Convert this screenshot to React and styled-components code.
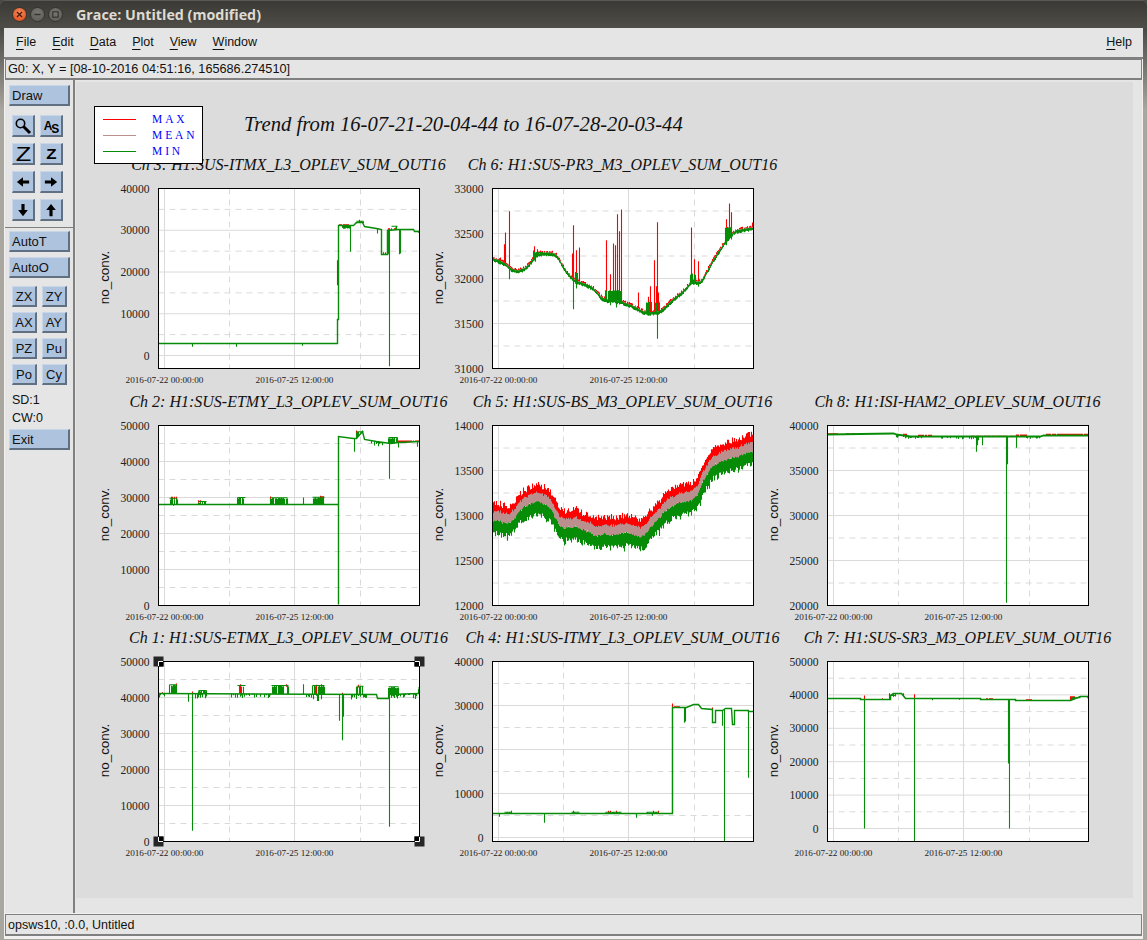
import styled, { createGlobalStyle } from 'styled-components';

const GlobalStyle = createGlobalStyle`
	html, body {
		margin: 0;
		padding: 0;
		background: #a9a59f;
	}
`;

const uiFont = `'Liberation Sans', Arial, sans-serif`;
const plotFont = `'Liberation Serif', 'Times New Roman', serif`;

const colors = {
	panel: '#e5e5e5',
	canvas: '#dcdcdc',
	line: '#808080',
	button: '#aec3dd',
	buttonDark: '#606f82',
	buttonLight: '#c8d6e7',
	grid: '#dadada',
	red: '#ff0000',
	mean: '#bc8f8f',
	green: '#078c07',
};

const Desktop = styled.div`
	width: 1147px;
	height: 940px;
	display: flex;
	flex-direction: column;
	overflow: hidden;
	background: linear-gradient(#4a4943 28px, #a9a59f 110px);
	font-family: ${uiFont};
`;

const TitleBar = styled.div`
	height: 28px;
	flex: none;
	display: flex;
	align-items: center;
	padding-left: 12px;
	border-radius: 5px 5px 0 0;
	background: linear-gradient(#3a3935, #4e4d47);
	box-shadow: inset 0 1px 0 #5a5954;
`;

const WinButton = styled.div`
	width: 15px;
	height: 15px;
	margin-right: 3px;
	border-radius: 50%;
	display: flex;
	align-items: center;
	justify-content: center;
	background: ${(p) => (p.$close ? 'radial-gradient(circle at 50% 35%, #f58a5c, #dd4814)' : 'radial-gradient(circle at 50% 35%, #777670, #5a5953)')};
	border: 1px solid #35342f;
	box-sizing: border-box;
`;

const WinTitle = styled.div`
	margin-left: 10px;
	font-family: 'Open Sans', sans-serif;
	font-weight: 700;
	font-size: 14.3px;
	color: #dfdbd2;
	white-space: nowrap;
`;

const Frame = styled.div`
	flex: 1;
	margin: 0 4px 1px 4px;
	padding: 0 1px 3px 1px;
	background: #f2f1ef;
	display: flex;
	flex-direction: column;
	min-height: 0;
`;

const MenuBar = styled.div`
	height: 31px;
	flex: none;
	margin: 0 -1px;
	display: flex;
	align-items: center;
	gap: 16px;
	padding: 0 11px 1px 12px;
	box-sizing: border-box;
	background: ${colors.panel};
	border-bottom: 2px solid ${colors.line};
	font-size: 12.5px;
	color: #111;
`;

const MenuItem = styled.span`
	margin-left: ${(p) => (p.$right ? 'auto' : '0')};
`;

const Mnemonic = styled.span`
	text-decoration: underline;
	text-decoration-thickness: 1px;
	text-underline-offset: 3px;
`;

const LocatorBar = styled.div`
	height: 21px;
	flex: none;
	box-sizing: border-box;
	border: 1px solid ${colors.line};
	border-bottom-width: 2px;
	background: ${colors.panel};
	padding: 0 2px;
	font-size: 12.7px;
	line-height: 18px;
	color: #111;
`;

const Main = styled.div`
	flex: 1;
	display: flex;
	min-height: 0;
	background: ${colors.panel};
`;

const ToolPanel = styled.div`
	width: 68px;
	flex: none;
	box-sizing: border-box;
	padding-top: 5px;
	display: flex;
	flex-direction: column;
	background: ${colors.panel};
	font-size: 12.5px;
	color: #111;
`;

const PanelEdge = styled.div`
	width: 3px;
	flex: none;
	border-left: 2px solid ${colors.line};
	box-sizing: border-box;
`;

const Button = styled.div`
	box-sizing: border-box;
	display: flex;
	align-items: center;
	background: ${colors.button};
	border-style: solid;
	border-width: 1px 2px 2px 1px;
	border-color: ${colors.buttonLight} ${colors.buttonDark} ${colors.buttonDark} ${colors.buttonLight};
	white-space: nowrap;
`;

const WideButton = styled(Button)`
	width: 61px;
	height: 21px;
	margin: ${(p) => p.$top || 0}px 0 0 4px;
	padding-left: 2px;
	font-size: 13px;
`;

const IconGrid = styled.div`
	display: grid;
	grid-template-columns: 23px 23px;
	grid-auto-rows: 22px;
	column-gap: 5px;
	row-gap: 6px;
	margin: 9px 0 0 7px;
`;

const IconButton = styled(Button)`
	justify-content: center;
	font-weight: 700;
	color: #000;
	font-size: 12px;
`;

const ZoomGlyph = styled.span`
	display: inline-block;
	font-size: ${(p) => p.$size}px;
	font-weight: ${(p) => p.$weight};
	line-height: 1;
	transform: scaleX(1.2);
`;

const PanelRule = styled.div`
	height: 1px;
	margin-top: 6px;
	background: ${colors.line};
`;

const TextGrid = styled.div`
	display: grid;
	grid-template-columns: 25px 25px;
	grid-auto-rows: 21px;
	column-gap: 5px;
	row-gap: 5px;
	margin: 8px 0 0 7px;
`;

const TextButton = styled(Button)`
	justify-content: center;
	font-size: 13px;
`;

const PanelNote = styled.div`
	margin: ${(p) => p.$top}px 0 0 7px;
	height: 14px;
	line-height: 14px;
	font-size: 12.5px;
`;

const CanvasWrap = styled.div`
	flex: 1;
	min-width: 0;
	padding: 2px 9px 15px 0;
`;

const Canvas = styled.div`
	position: relative;
	height: 100%;
	box-sizing: border-box;
	background: ${colors.canvas};
	padding-left: 20px;
`;

const MainTitle = styled.div`
	height: 70px;
	box-sizing: border-box;
	padding: 29px 0 0 148px;
	font: italic 20.65px/26px ${plotFont};
	color: #111;
	white-space: nowrap;
`;

const Legend = styled.div`
	position: absolute;
	left: 18px;
	top: 24px;
	width: 109px;
	height: 58px;
	box-sizing: border-box;
	border: 1px solid #000;
	background: #fff;
	padding: 4px 0 0 8px;
	display: flex;
	flex-direction: column;
	z-index: 2;
`;

const LegendRow = styled.div`
	height: 16px;
	display: flex;
	align-items: center;
	gap: 16px;
`;

const LegendLine = styled.div`
	width: 33px;
	height: 1px;
	background: ${(p) => p.$color};
`;

const LegendLabel = styled.div`
	font: 11.5px/16px ${plotFont};
	letter-spacing: 2.9px;
	color: #0000ff;
`;

const PlotGrid = styled.div`
	display: grid;
	grid-template-columns: 334px 335px 334px;
	grid-template-rows: 237px 236px 236px;
`;

const PlotCell = styled.div`
	width: 100%;
`;

const PlotTitle = styled.div`
	height: 36px;
	box-sizing: border-box;
	margin-left: 62px;
	width: 261px;
	padding-top: 3px;
	display: flex;
	justify-content: center;
	font: italic 16px/20px ${plotFont};
	color: #111;
	white-space: nowrap;
`;

const PlotSvg = styled.svg`
	display: block;
	overflow: visible;
	font-family: ${plotFont};
`;

const StatusBar = styled.div`
	height: 22px;
	flex: none;
	box-sizing: border-box;
	margin-top: 1px;
	border: 1px solid ${colors.line};
	border-bottom-width: 2px;
	background: ${colors.panel};
	padding: 0 2px;
	font-size: 12.5px;
	line-height: 20px;
	color: #111;
`;

const TextIcon = styled.span`
	position: relative;
	font-size: 12px;
	line-height: 12px;
	letter-spacing: -1px;
	& > span {
		position: relative;
		top: 3px;
	}
`;

// small seeded random, the traces must look the same on every load
function makeRandom(seed) {
	let s = seed;
	return () => {
		s = (s + 0x6d2b79f5) | 0;
		let t = Math.imul(s ^ (s >>> 15), 1 | s);
		t = (t + Math.imul(t ^ (t >>> 7), 61 | t)) ^ t;
		return ((t ^ (t >>> 14)) >>> 0) / 4294967296;
	};
}

function interp(points, x) {
	if (x <= points[0][0]) return points[0][1];
	for (let i = 1; i < points.length; i++) {
		if (x <= points[i][0]) {
			const [x0, y0] = points[i - 1];
			const [x1, y1] = points[i];
			if (x1 === x0) return y1;
			return y0 + ((y1 - y0) * (x - x0)) / (x1 - x0);
		}
	}
	return points[points.length - 1][1];
}

const n = (v) => v.toFixed(1);

// all trace numbers are read off the screenshot at 3x, ox/oy is the frame corner
function buildTrace(spec) {
	const rand = makeRandom(spec.seed);
	const px = (x) => Math.round((x - spec.ox) / 3);
	const py = (y) => (y - spec.oy) / 3;
	const at = (x) => interp(spec.base, x);
	const smooth = (x) => {
		let sum = 0;
		for (let k = -12; k <= 12; k += 3) sum += at(x + k);
		return py(sum / 9);
	};
	let red = '';
	let mean = '';
	let green = '';
	let line = '';

	if (spec.band) {
		let drift = 0;
		for (let x = 1; x <= 260; x += 1) {
			drift = drift * 0.6 + (rand() - 0.5) * 2.4;
			const c = smooth(spec.ox + x * 3) + drift;
			const top = c - 9 - rand() * 6;
			const bottom = c + 15 + rand() * 6 + (rand() > 0.93 ? 3 : 0);
			red += `M${x} ${n(top)}V${n(c)}`;
			mean += `M${x} ${n(c - 3 - rand() * 2)}V${n(c + 5 + rand() * 2)}`;
			green += `M${x} ${n(c + 5 + rand())}V${n(bottom)}`;
		}
		return { red, mean, green, line };
	}

	if (spec.fuzz) {
		for (let x = 1; x <= 260; x += 1) {
			const c = smooth(spec.ox + x * 3);
			if (rand() < 0.7) red += `M${x} ${n(c - 2 - rand() * 1.5)}V${n(c)}`;
			mean += `M${x} ${n(c - 1.4)}V${n(c)}`;
			green += `M${x} ${n(c - 0.6 - rand() * 0.8)}V${n(c + 1.2 + rand() * 1.4)}`;
		}
	} else {
		line = spec.base.map(([x, y], i) => `${i ? 'L' : 'M'}${px(x)} ${Math.round(py(y))}`).join('');
	}
	const baseY = (x) => (spec.fuzz ? smooth(x) : py(at(x)));
	;(spec.up || []).forEach(([x, top, bottom]) => {
		red += `M${px(x)} ${n(py(top))}V${n(bottom !== undefined ? py(bottom) : baseY(x))}`;
	});
	;(spec.redRuns || []).forEach(([x0, x1, y]) => {
		for (let x = x0; x < x1; x += 3) {
			if (rand() < (spec.redFill ?? 0.6)) red += `M${px(x)} ${n(py(y))}V${n(baseY(x))}`;
		}
	});
	;(spec.blocks || []).forEach(([x0, x1, top]) => {
		for (let x = x0; x <= x1; x += 3) {
			if (rand() < 0.78) green += `M${px(x)} ${n(py(top + rand() * 4))}V${n(baseY(x))}`;
			if (rand() < 0.1) red += `M${px(x)} ${n(py(top - 4))}V${n(py(top + 4))}`;
		}
		if (!spec.fuzz) green += `M${px(x0)} ${n(py(top))}H${px(x1)}`;
	});
	;(spec.jitter || []).forEach(([x0, x1, depth]) => {
		for (let x = x0; x <= x1; x += 3) {
			if (rand() < 0.55) green += `M${px(x)} ${n(baseY(x))}v${n((rand() * depth) / 3 + 1)}`;
		}
	});
	;(spec.down || []).forEach(([x, y]) => {
		green += `M${px(x)} ${n(baseY(x))}V${n(py(y))}`;
	});
	return { red, mean, green, line };
}

const traces = {
	ch3: {
		seed: 3, ox: 205, oy: 115,
		base: [[205, 580], [742, 580], [742, 507], [745, 507], [745, 225], [790, 225], [800, 218], [818, 216], [822, 228], [860, 235], [873, 238], [873, 312], [892, 312], [892, 240], [925, 238], [970, 238], [972, 243], [988, 245]],
		up: [[742, 330, 405]],
		redRuns: [[745, 778, 222], [860, 874, 234], [875, 892, 306], [895, 915, 234]],
		blocks: [[756, 778, 232], [798, 820, 213], [892, 900, 240], [905, 922, 228]],
		down: [[307, 590], [439, 590], [637, 587], [781, 305], [862, 250], [891, 312], [894, 312], [898, 648], [928, 312], [931, 310], [985, 248]],
	},
	ch6: {
		seed: 6, ox: 97, oy: 115, fuzz: true,
		base: [[97, 325], [135, 342], [165, 367], [200, 355], [225, 320], [240, 310], [290, 312], [310, 355], [340, 392], [365, 400], [400, 415], [430, 452], [470, 452], [520, 470], [555, 490], [600, 488], [630, 457], [670, 425], [700, 390], [720, 405], [760, 330], [800, 270], [825, 243], [880, 235]],
		up: [[122, 322], [134, 282], [136, 247], [148, 183], [222, 288], [232, 297], [338, 310], [340, 225], [350, 300], [357, 292], [438, 270], [452, 372], [460, 280], [466, 285], [472, 192], [478, 243], [484, 178], [535, 427], [565, 440], [571, 408], [584, 330], [590, 408], [592, 216], [596, 427], [690, 387], [693, 232], [703, 327], [716, 333], [800, 207], [808, 160], [815, 186], [878, 217]],
		blocks: [[220, 250, 305], [336, 352, 365], [436, 486, 420], [560, 600, 455], [692, 712, 370], [795, 815, 230]],
		down: [[148, 387], [225, 335], [340, 477], [350, 415], [452, 465], [470, 472], [565, 490], [592, 566], [716, 410], [800, 285], [815, 268]],
	},
	ch2: {
		seed: 2, ox: 205, oy: 106,
		base: [[205, 343], [745, 343], [745, 642], [745, 138], [790, 145], [800, 145], [818, 125], [822, 148], [860, 155], [900, 160], [925, 158], [988, 155]],
		redRuns: [[690, 702, 318], [925, 988, 151]],
		redFill: 0.9,
		blocks: [[238, 262, 324], [325, 350, 334], [442, 465, 322], [541, 592, 323], [668, 702, 321], [800, 820, 125], [895, 922, 142]],
		down: [[250, 347], [640, 322], [722, 342], [793, 185], [898, 266], [925, 172], [982, 170]],
		jitter: [[840, 880, 10]],
	},
	ch5: {
		seed: 5, ox: 97, oy: 106, band: true,
		base: [[97, 375], [150, 385], [180, 345], [210, 320], [245, 320], [275, 345], [300, 400], [350, 395], [400, 415], [450, 420], [500, 415], [550, 425], [580, 385], [620, 340], [660, 320], [710, 310], [730, 255], [760, 210], [800, 190], [850, 180], [880, 165]],
	},
	ch8: {
		seed: 8, ox: 112, oy: 106, width: 1.8,
		base: [[112, 132], [310, 131], [320, 134], [360, 138], [430, 140], [680, 140], [710, 140], [750, 138], [760, 136], [895, 135]],
		redRuns: [[112, 145, 129], [170, 200, 129], [340, 352, 131], [385, 425, 134], [545, 680, 137], [680, 712, 133], [770, 895, 131]],
		redFill: 0.85,
		down: [[560, 185], [562, 165], [564, 150], [577, 165], [650, 638], [652, 222], [680, 173]],
		jitter: [[320, 400, 6], [450, 560, 5], [710, 750, 5]],
	},
	ch1: {
		seed: 1, ox: 205, oy: 94,
		base: [[205, 190], [860, 192], [862, 205], [895, 205], [897, 192], [988, 190]],
		blocks: [[238, 260, 164], [325, 350, 181], [442, 465, 166], [543, 595, 166], [666, 702, 166], [800, 820, 168], [895, 925, 170], [985, 988, 172]],
		down: [[295, 215], [307, 602], [640, 162], [748, 272], [757, 330], [760, 260], [898, 590]],
		jitter: [[205, 236, 14], [310, 350, 14], [420, 540, 10], [630, 700, 20], [780, 830, 14], [905, 985, 14]],
		up: [[307, 184], [757, 188], [452, 162], [217, 186], [678, 164]],
	},
	ch4: {
		seed: 4, ox: 97, oy: 94,
		base: [[97, 550], [637, 550], [637, 231], [680, 231], [700, 224], [716, 224], [725, 236], [757, 238], [757, 278], [767, 278], [767, 241], [787, 241], [795, 236], [815, 234], [818, 283], [824, 283], [824, 241], [865, 241], [866, 245], [880, 245]],
		up: [[637, 220], [757, 232]],
		redRuns: [[640, 660, 228]],
		blocks: [[132, 155, 546], [335, 357, 546], [435, 485, 546], [560, 596, 546]],
		down: [[118, 560], [253, 578], [529, 563], [578, 557], [672, 278], [675, 274], [787, 287], [793, 633], [865, 443]],
	},
	ch7: {
		seed: 7, ox: 112, oy: 94, width: 1.5,
		base: [[112, 205], [210, 205], [210, 208], [300, 208], [300, 197], [310, 190], [335, 190], [345, 205], [570, 205], [570, 208], [675, 208], [675, 211], [840, 211], [870, 199], [892, 199], [895, 205]],
		up: [[223, 196], [373, 192], [278, 204], [298, 189], [340, 189]],
		redRuns: [[590, 610, 204], [710, 726, 207], [840, 855, 198]],
		redFill: 0.9,
		blocks: [[300, 316, 196], [845, 870, 203]],
		down: [[223, 595], [373, 633], [428, 210], [508, 209], [655, 400], [656, 400], [658, 595]],
	},
};

function makeTicks(top, step, pxStep) {
	const out = [];
	for (let i = 0; i * pxStep <= 181; i++) out.push({ label: top - i * step, y: i * pxStep });
	return out;
}

const FRAME_X = 62.5;
const FRAME_W = 261;
const FRAME_H = 180;

function Plot({ title, trace, ticks, pxStep, selected }) {
	const t = buildTrace(trace);
	return (
		<PlotCell>
			<PlotTitle>{title}</PlotTitle>
			<PlotSvg width='334' height='200'>
				<g transform={`translate(${FRAME_X} 0.5)`}>
					<rect width={FRAME_W} height={FRAME_H} fill='#fff' />
					{ticks.map((tk) => (
						<line key={tk.y} x1='0' x2={FRAME_W} y1={tk.y} y2={tk.y} stroke={colors.grid} />
					))}
					{ticks.map((tk) =>
						tk.y + pxStep / 2 < FRAME_H ? (
							<line key={tk.y} x1='0' x2={FRAME_W} y1={tk.y + pxStep / 2} y2={tk.y + pxStep / 2} stroke={colors.grid} strokeDasharray='6 5' />
						) : null
					)}
					<path d={`M6 0V${FRAME_H}M136 0V${FRAME_H}`} stroke={colors.grid} />
					<path d={`M71 0V${FRAME_H}M202 0V${FRAME_H}`} stroke={colors.grid} strokeDasharray='6 5' />
					<path d={t.red} stroke={colors.red} fill='none' strokeWidth='1.1' />
					<path d={t.mean} stroke={colors.mean} fill='none' strokeWidth='1.1' />
					<path d={t.green} stroke={colors.green} fill='none' strokeWidth='1.1' />
					{t.line && <path d={t.line} stroke={colors.green} fill='none' strokeWidth={trace.width || 1.4} />}
					<rect width={FRAME_W} height={FRAME_H} fill='none' stroke='#000' />
					{ticks.map((tk) => (
						<text key={tk.y} x='-9' y={tk.y + 4} textAnchor='end' fontSize='11.6' fill='#222'>
							{tk.label}
						</text>
					))}
					<text x='6' y={FRAME_H + 14.5} textAnchor='middle' fontSize='9.2' fill='#222'>
						2016-07-22 00:00:00
					</text>
					<text x='136' y={FRAME_H + 14.5} textAnchor='middle' fontSize='9.2' fill='#222'>
						2016-07-25 12:00:00
					</text>
					<text
						transform={`translate(-50 ${FRAME_H / 2 - 1}) rotate(-90)`}
						textAnchor='middle'
						fontSize='13.4'
						fontFamily={uiFont}
						fill='#111'
					>
						no_conv.
					</text>
					{selected &&
						[
							[0, 0, 1, 1],
							[FRAME_W, 0, -1, 1],
							[0, FRAME_H, 1, -1],
							[FRAME_W, FRAME_H, -1, -1],
						].map(([x, y, sx, sy]) => (
							<g key={`${x}-${y}`} transform={`translate(${x} ${y}) scale(${sx} ${sy})`}>
								<rect x='-5' y='-5' width='10' height='10' fill='#262626' />
								<rect width='5' height='5' fill='#000' />
								<path d='M4.5 0H0V4.5' stroke='#fff' fill='none' />
							</g>
						))}
				</g>
			</PlotSvg>
		</PlotCell>
	);
}

const MENU = ['File', 'Edit', 'Data', 'Plot', 'View', 'Window'];
const TEXT_BUTTONS = ['ZX', 'ZY', 'AX', 'AY', 'PZ', 'Pu', 'Po', 'Cy'];

const Arrow = ({ rotate }) => (
	<svg width='14' height='14' viewBox='0 0 16 16' style={{ transform: `rotate(${rotate}deg)` }}>
		<path d='M1 8 L8 2.5 V6.2 H15 V9.8 H8 V13.5 Z' fill='#000' />
	</svg>
);

const Magnifier = () => (
	<svg width='18' height='18' viewBox='0 0 18 18'>
		<circle cx='6.5' cy='6.5' r='4.2' fill='none' stroke='#000' strokeWidth='1.6' />
		<path d='M9.5 9.5 L16 16' stroke='#000' strokeWidth='3' />
	</svg>
);

export default function App() {
	return (
		<Desktop>
			<GlobalStyle />
			<TitleBar>
				<WinButton $close>
					<svg width='7' height='7' viewBox='0 0 7 7'>
						<path d='M1 1 L6 6 M6 1 L1 6' stroke='#4a1a08' strokeWidth='1.3' />
					</svg>
				</WinButton>
				<WinButton>
					<svg width='7' height='7' viewBox='0 0 7 7'>
						<path d='M0.5 3.5 H6.5' stroke='#33322d' strokeWidth='1.4' />
					</svg>
				</WinButton>
				<WinButton>
					<svg width='7' height='7' viewBox='0 0 7 7'>
						<rect x='0.8' y='0.8' width='5.4' height='5.4' fill='none' stroke='#33322d' strokeWidth='1.1' />
					</svg>
				</WinButton>
				<WinTitle>Grace: Untitled (modified)</WinTitle>
			</TitleBar>
			<Frame>
				<MenuBar>
					{MENU.map((m) => (
						<MenuItem key={m}>
							<Mnemonic>{m[0]}</Mnemonic>
							{m.slice(1)}
						</MenuItem>
					))}
					<MenuItem $right>
						<Mnemonic>H</Mnemonic>elp
					</MenuItem>
				</MenuBar>
				<LocatorBar>G0: X, Y = [08-10-2016 04:51:16, 165686.274510]</LocatorBar>
				<Main>
					<ToolPanel>
						<WideButton>Draw</WideButton>
						<IconGrid>
							<IconButton><Magnifier /></IconButton>
							<IconButton><TextIcon>A<span>S</span></TextIcon></IconButton>
							<IconButton><ZoomGlyph $size={21} $weight={400}>Z</ZoomGlyph></IconButton>
							<IconButton><ZoomGlyph $size={14} $weight={700}>Z</ZoomGlyph></IconButton>
							<IconButton><Arrow rotate={0} /></IconButton>
							<IconButton><Arrow rotate={180} /></IconButton>
							<IconButton><Arrow rotate={-90} /></IconButton>
							<IconButton><Arrow rotate={90} /></IconButton>
						</IconGrid>
						<PanelRule />
						<WideButton $top={3}>AutoT</WideButton>
						<WideButton $top={5}>AutoO</WideButton>
						<TextGrid>
							{TEXT_BUTTONS.map((b) => (
								<TextButton key={b}>{b}</TextButton>
							))}
						</TextGrid>
						<PanelNote $top={8}>SD:1</PanelNote>
						<PanelNote $top={4}>CW:0</PanelNote>
						<WideButton $top={4}>Exit</WideButton>
					</ToolPanel>
					<PanelEdge />
					<CanvasWrap>
						<Canvas>
							<Legend>
								<LegendRow>
									<LegendLine $color={colors.red} />
									<LegendLabel>MAX</LegendLabel>
								</LegendRow>
								<LegendRow>
									<LegendLine $color={colors.mean} />
									<LegendLabel>MEAN</LegendLabel>
								</LegendRow>
								<LegendRow>
									<LegendLine $color={colors.green} />
									<LegendLabel>MIN</LegendLabel>
								</LegendRow>
							</Legend>
							<MainTitle>Trend from 16-07-21-20-04-44 to 16-07-28-20-03-44</MainTitle>
							<PlotGrid>
								<Plot title='Ch 3: H1:SUS-ITMX_L3_OPLEV_SUM_OUT16' trace={traces.ch3} ticks={makeTicks(40000, 10000, 41.75)} pxStep={41.75} />
								<Plot title='Ch 6: H1:SUS-PR3_M3_OPLEV_SUM_OUT16' trace={traces.ch6} ticks={makeTicks(33000, 500, 45)} pxStep={45} />
								<div />
								<Plot title='Ch 2: H1:SUS-ETMY_L3_OPLEV_SUM_OUT16' trace={traces.ch2} ticks={makeTicks(50000, 10000, 36)} pxStep={36} />
								<Plot title='Ch 5: H1:SUS-BS_M3_OPLEV_SUM_OUT16' trace={traces.ch5} ticks={makeTicks(14000, 500, 45)} pxStep={45} />
								<Plot title='Ch 8: H1:ISI-HAM2_OPLEV_SUM_OUT16' trace={traces.ch8} ticks={makeTicks(40000, 5000, 45)} pxStep={45} />
								<Plot title='Ch 1: H1:SUS-ETMX_L3_OPLEV_SUM_OUT16' trace={traces.ch1} ticks={makeTicks(50000, 10000, 36)} pxStep={36} selected />
								<Plot title='Ch 4: H1:SUS-ITMY_L3_OPLEV_SUM_OUT16' trace={traces.ch4} ticks={makeTicks(40000, 10000, 44)} pxStep={44} />
								<Plot title='Ch 7: H1:SUS-SR3_M3_OPLEV_SUM_OUT16' trace={traces.ch7} ticks={makeTicks(50000, 10000, 33.4)} pxStep={33.4} />
							</PlotGrid>
						</Canvas>
					</CanvasWrap>
				</Main>
				<StatusBar>opsws10, :0.0, Untitled</StatusBar>
			</Frame>
		</Desktop>
	);
}
